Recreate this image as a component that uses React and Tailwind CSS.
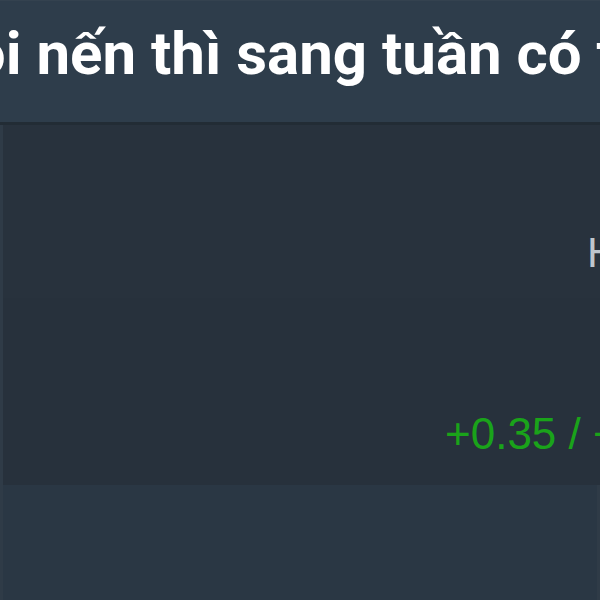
export default function App() {
  return (
    <div className="w-[600px] h-[600px] overflow-hidden flex flex-col bg-[#2a3744] font-['Liberation_Sans',Arial,sans-serif]">
      <header className="h-[125px] shrink-0 bg-[#2e3d4b] border-t border-[#34424f] border-b-[3px] border-b-[#222c35] overflow-hidden">
        <h1 className="ml-[-66px] pt-[20px] whitespace-nowrap font-['Roboto',sans-serif] text-[60px] leading-[66px] font-bold text-white">
          đội nến thì sang tuần có thể tăng
        </h1>
      </header>
      <section className="h-[173px] shrink-0 bg-[#28323d] border-l-[3px] border-[#2f3b47] grid grid-cols-[584px_1fr] items-start overflow-hidden">
        <div />
        <span className="whitespace-nowrap text-[42px] leading-none text-[#bfc6cd] pt-[107px]">Hôm nay</span>
      </section>
      <section className="h-[187px] shrink-0 bg-[#27313c] border-l-[3px] border-[#2f3b47] grid grid-cols-[442px_1fr] items-start overflow-hidden">
        <div />
        <span className="whitespace-nowrap text-[44px] leading-none text-[#1aa31a] pt-[114px]">+0.35 / +0.29%</span>
      </section>
      <div className="flex-1 bg-[#2a3744] border-l-[3px] border-r-[3px] border-[#2f3b47]" />
    </div>
  );
}
